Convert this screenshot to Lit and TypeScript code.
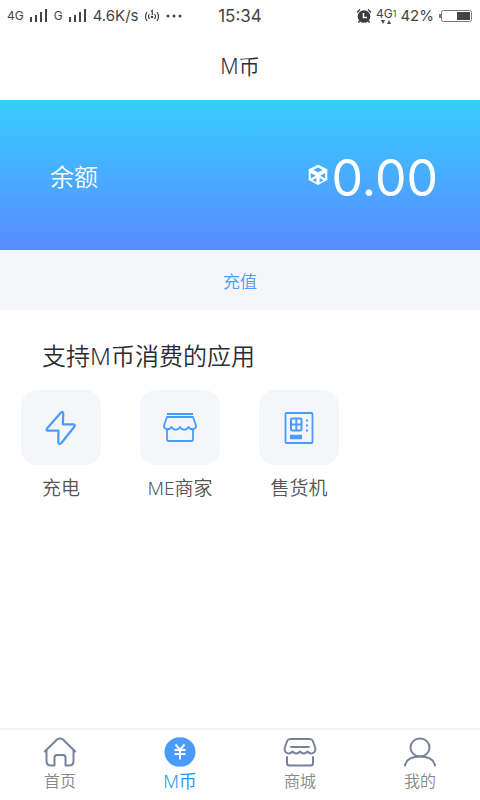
import { LitElement, html, css, svg } from "lit";
import { customElement } from "lit/decorators.js";
import { classMap } from "lit/directives/class-map.js";

const bolt = html`<svg width="34" height="38" viewBox="0 0 34 38" fill="none" stroke="#4a9bff" stroke-width="2.200" stroke-linejoin="round" aria-hidden="true">
  <path d="M17 3.600 3 19.500Q1.800 21.500 4 21.700H14.500L14.300 33.500Q15 36.200 17.200 34.200L30.500 17.500Q31.500 15.500 29.300 15.300H18.800L19.300 4.500Q18.700 2 17 3.600Z"/></svg>`;

const stall = html`<svg width="36" height="34" viewBox="0 0 36 34" fill="none" stroke="#4a9bff" stroke-width="1.800" stroke-linejoin="round" aria-hidden="true">
  <path d="M5 3H31" stroke-width="2"/>
  <path d="M5 6H31L34 14.500C34.500 18 29 20 26.500 16C24.500 19.500 20 19.500 18 16C16 19.500 11.500 19.500 9.500 16C7 20 1.500 18 2 14.500Z"/>
  <path d="M5 18.500V28Q5 30 7 30H29Q31 30 31 28V18.500"/></svg>`;

const vending = html`<svg width="30" height="34" viewBox="0 0 30 34" fill="none" stroke="#4a9bff" stroke-width="1.800" aria-hidden="true">
  <rect x="1.500" y="2" width="27" height="30" rx="1"/>
  <rect x="7" y="7.500" width="10.500" height="12" rx="1" stroke-width="2"/><path d="M12.300 7.500V19.500M7 13.500H17.500"/>
  <path d="M6 26H18" stroke-width="4.500"/>
  <path d="M22 9.500H24M22 14.500H24M22 19.500H24"/></svg>`;

const home = html`<svg width="34" height="30" viewBox="0 0 34 30" fill="none" stroke="#76839c" stroke-width="2" stroke-linejoin="round" stroke-linecap="round" aria-hidden="true">
  <path d="M1.800 14.500 14 2.500Q17 .500 20 2.500L32.200 14.500"/>
  <path d="M3.500 13V24Q3.500 28.500 8 28.500H11.500V20.500Q11.500 18 14 18H20Q22.500 18 22.500 20.500V28.500H26Q30.500 28.500 30.500 24V13"/></svg>`;

const coin = html`<svg width="32" height="30" viewBox="0 0 32 30" fill="none" stroke="#fff" stroke-width="2" aria-hidden="true">
  <ellipse cx="16" cy="15" rx="15.500" ry="14.700" fill="#4a9bff" stroke="none"/>
  <path d="M11.500 7.500 16 13 20.500 7.500M10.500 13H21.500M10.500 17H21.500M16 13V22.500"/></svg>`;

const shop = html`<svg width="34" height="30" viewBox="0 0 34 30" fill="none" stroke="#76839c" stroke-width="2" stroke-linejoin="round" stroke-linecap="round" aria-hidden="true">
  <path d="M7 2H27Q29 2 29.800 4L32.300 11C33 16.500 27.500 18 24.500 14.500C22 17.500 19.500 17 17 14.500C14.500 17 12 17.500 9.500 14.500C6.500 18 1 16.500 1.700 11L4.200 4Q5 2 7 2Z"/>
  <path d="M8 10H26M4 20V26Q4 28.500 6.500 28.500H27.500Q30 28.500 30 26V20"/></svg>`;

const person = html`<svg width="34" height="30" viewBox="0 0 34 30" fill="none" stroke="#76839c" stroke-width="2" stroke-linecap="round" aria-hidden="true">
  <ellipse cx="17" cy="10.500" rx="9.500" ry="9"/>
  <path d="M2 28.500C3 22.500 9 19.500 17 19.500S31 22.500 32 28.500"/></svg>`;

const cube = html`<svg width="20" height="22" viewBox="0 0 20 22" fill="none" aria-hidden="true">
  <path d="M10 .800 19.300 5.300V16L10 21 .700 16V5.300Z" fill="#fff"/>
  <path d="M10 3.600 14.800 6 10 8.200 5.200 6ZM2.800 9.200 7.800 11.600 2.800 14.600ZM17.200 9.200 12.200 11.600 17.200 14.600ZM4.500 16.200 8.300 14V18.200ZM15.500 16.200 11.700 14V18.200Z" fill="#45a9ff"/></svg>`;

const signal = html`<svg width="20" height="14" viewBox="0 0 20 14" fill="#444" aria-hidden="true">
  ${[5, 7, 10, 13].map((h, i) => svg`<rect x=${i * 5 + 1} y=${13 - h} width="2" height=${h}></rect>`)}</svg>`;

@customElement("app-root")
export class AppRoot extends LitElement {
  static styles = css`
    :host {
      display: flex;
      flex-direction: column;
      min-height: 100vh;
      background: #fff;
      color: #2a2d33;
      font-family: "Noto Sans", "Noto Sans CJK SC", sans-serif;
      font-weight: 350;
    }
    * { box-sizing: border-box; }
    svg { display: block; flex: none; }
    button { font: inherit; border: 0; background: none; padding: 0; cursor: pointer; }
    .status {
      display: grid;
      grid-template-columns: 1fr auto 1fr;
      align-items: center;
      height: 32px;
      padding: 0 7px;
      font: 15px/20px Inter, sans-serif;
      color: #444;
    }
    .group { display: flex; align-items: center; gap: 4px; }
    .lead { gap: 5px; }
    .end { justify-content: flex-end; }
    .small { font-size: 12px; }
    .time { font-size: 17px; }
    .net { display: flex; flex-direction: column; align-items: center; font-size: 12px; line-height: 12px; }
    .net span { display: flex; align-items: center; }
    .net .sub { font-size: 9px; }
    .title { margin: 0; height: 68px; font-size: 21px; line-height: 68px; font-weight: inherit; text-align: center; }
    .balance {
      display: flex;
      align-items: center;
      justify-content: space-between;
      height: 150px;
      padding: 0 42px 0 50px;
      color: #fff;
      font-size: 24px;
      background: linear-gradient(#35ceff, #5a8cff);
    }
    .amount { display: flex; align-items: center; gap: 4px; font: 400 50px/60px Inter, sans-serif; }
    .amount span { padding-top: 6px; }
    .recharge { height: 60px; background: #f4f6fa; color: #4a9bff; font-size: 17px; }
    .heading { margin: 28px 42px 16px; font-size: 24px; line-height: 36px; font-weight: inherit; }
    .apps { display: flex; gap: 19px; padding: 0 11px; }
    .app { display: flex; flex-direction: column; align-items: center; gap: 8px; width: 100px; color: #555; font-size: 19px; line-height: 30px; }
    .tile { display: flex; align-items: center; justify-content: center; width: 80px; height: 75px; border-radius: 16px; background: #f4f6fa; }
    .tabs { display: grid; grid-template-columns: repeat(4, 1fr); margin-top: auto; height: 72px; border-top: 2px solid #f3f3f4; }
    .tab { display: flex; flex-direction: column; align-items: center; justify-content: center; color: #888; font-size: 16px; line-height: 24px; gap: 2px; }
    .active { color: #1296f5; font-size: 18px; }
  `;

  private apps = [
    { label: "充电", icon: bolt },
    { label: "ME商家", icon: stall },
    { label: "售货机", icon: vending },
  ];

  private tabs = [
    { label: "首页", icon: home },
    { label: "M币", icon: coin, active: true },
    { label: "商城", icon: shop },
    { label: "我的", icon: person },
  ];

  render() {
    return html`
      <div class="status">
        <div class="group lead">
          <span class="small">4G</span>${signal}
          <span class="small">G</span>${signal}
          <span>4.6K/s</span>
          <svg width="16" height="14" viewBox="0 0 16 14" fill="none" stroke="#444" stroke-width="1.200" aria-hidden="true">
            <path d="M3 3Q0 7.500 3 12M5.500 5Q3.500 7.500 5.500 10M13 3Q16 7.500 13 12M10.500 5Q12.500 7.500 10.500 10M7 2.500 8.300 1.500V6"/>
            <circle cx="8" cy="8" r="1.300" fill="#444" stroke="none"/></svg>
          <svg width="18" height="4" viewBox="0 0 18 4" fill="#444" aria-hidden="true"><circle cx="3" cy="2" r="1.500"/><circle cx="9" cy="2" r="1.500"/><circle cx="15" cy="2" r="1.500"/></svg>
        </div>
        <span class="time">15:34</span>
        <div class="group end">
          <svg width="16" height="16" viewBox="0 0 16 16" fill="none" aria-hidden="true">
            <circle cx="8" cy="8.500" r="6.300" fill="#3c3c3c"/>
            <path d="M1 4.500 4 1.500M12 1.500 15 4.500M3.500 13 2.500 14.500M12.500 13 13.500 14.500" stroke="#3c3c3c" stroke-width="1.500"/>
            <path d="M7.500 5V9.500H11" stroke="#fff" stroke-width="1.500"/></svg>
          <span class="net"><span>4G<span class="sub">1</span></span>
            <svg width="12" height="4" viewBox="0 0 12 4" fill="#444" aria-hidden="true"><path d="M1 0H5L3 4ZM7 4H11L9 0Z"/></svg></span>
          <span>42%</span>
          <svg width="35" height="14" viewBox="0 0 35 14" aria-hidden="true">
            <rect x="3.500" y="1.500" width="30" height="11" rx="2" fill="#fff" stroke="#777"/>
            <rect x="1" y="5" width="2" height="4" fill="#777"/><rect x="19" y="3" width="13" height="8" fill="#444"/></svg>
        </div>
      </div>
      <h1 class="title">M币</h1>
      <section class="balance">
        <span>余额</span>
        <span class="amount">${cube}<span>0.00</span></span>
      </section>
      <button class="recharge">充值</button>
      <h2 class="heading">支持M币消费的应用</h2>
      <div class="apps">
        ${this.apps.map((a) => html`<button class="app"><span class="tile">${a.icon}</span><span>${a.label}</span></button>`)}
      </div>
      <nav class="tabs">
        ${this.tabs.map((t) => html`<button class=${classMap({ tab: true, active: !!t.active })}>${t.icon}<span>${t.label}</span></button>`)}
      </nav>
    `;
  }
}
